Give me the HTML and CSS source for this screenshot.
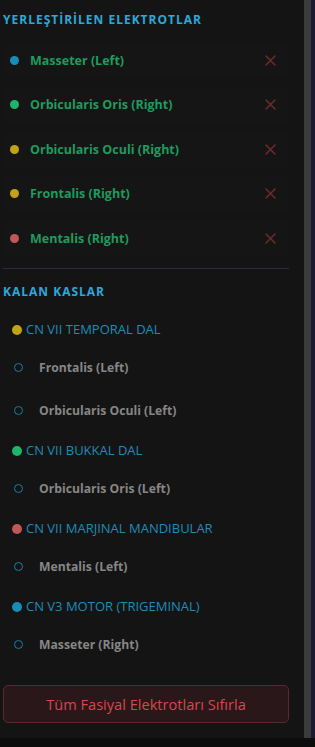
FILE: index.html
```html
<!DOCTYPE html>
<html lang="tr">
<head>
    <meta charset="UTF-8">
    <meta name="viewport" content="width=device-width, initial-scale=1.0">
    <title>Fasiyal Elektrotlar</title>
    <link rel="stylesheet" href="styles.css">
</head>
<body>
    <div class="app">
        <div class="sidebar-row">
            <aside class="panel">
                <h2 class="section-title">Yerleştirilen Elektrotlar</h2>
                <ul class="placed-list">
                    <li class="placed-item">
                        <span class="dot dot-blue"></span>
                        <span class="placed-name">Masseter (Left)</span>
                        <button class="remove-btn" title="Kaldır">
                            <svg width="11" height="11" viewBox="0 0 11 11"><path d="M1 1 L10 10 M10 1 L1 10" stroke="currentColor" stroke-width="1.5" stroke-linecap="round"/></svg>
                        </button>
                    </li>
                    <li class="placed-item">
                        <span class="dot dot-green"></span>
                        <span class="placed-name">Orbicularis Oris (Right)</span>
                        <button class="remove-btn" title="Kaldır">
                            <svg width="11" height="11" viewBox="0 0 11 11"><path d="M1 1 L10 10 M10 1 L1 10" stroke="currentColor" stroke-width="1.5" stroke-linecap="round"/></svg>
                        </button>
                    </li>
                    <li class="placed-item">
                        <span class="dot dot-yellow"></span>
                        <span class="placed-name">Orbicularis Oculi (Right)</span>
                        <button class="remove-btn" title="Kaldır">
                            <svg width="11" height="11" viewBox="0 0 11 11"><path d="M1 1 L10 10 M10 1 L1 10" stroke="currentColor" stroke-width="1.5" stroke-linecap="round"/></svg>
                        </button>
                    </li>
                    <li class="placed-item">
                        <span class="dot dot-yellow"></span>
                        <span class="placed-name">Frontalis (Right)</span>
                        <button class="remove-btn" title="Kaldır">
                            <svg width="11" height="11" viewBox="0 0 11 11"><path d="M1 1 L10 10 M10 1 L1 10" stroke="currentColor" stroke-width="1.5" stroke-linecap="round"/></svg>
                        </button>
                    </li>
                    <li class="placed-item">
                        <span class="dot dot-red"></span>
                        <span class="placed-name">Mentalis (Right)</span>
                        <button class="remove-btn" title="Kaldır">
                            <svg width="11" height="11" viewBox="0 0 11 11"><path d="M1 1 L10 10 M10 1 L1 10" stroke="currentColor" stroke-width="1.5" stroke-linecap="round"/></svg>
                        </button>
                    </li>
                </ul>

                <hr class="divider">

                <h2 class="section-title section-title-2">Kalan Kaslar</h2>

                <div class="nerve-group">
                    <div class="nerve-title"><span class="nerve-dot dot-yellow"></span>CN VII TEMPORAL DAL</div>
                    <ul class="muscle-list">
                        <li class="muscle-item"><span class="ring"></span>Frontalis (Left)</li>
                        <li class="muscle-item"><span class="ring"></span>Orbicularis Oculi (Left)</li>
                    </ul>
                </div>
                <div class="nerve-group">
                    <div class="nerve-title"><span class="nerve-dot dot-green"></span>CN VII BUKKAL DAL</div>
                    <ul class="muscle-list">
                        <li class="muscle-item"><span class="ring"></span>Orbicularis Oris (Left)</li>
                    </ul>
                </div>
                <div class="nerve-group">
                    <div class="nerve-title"><span class="nerve-dot dot-red"></span>CN VII MARJINAL MANDIBULAR</div>
                    <ul class="muscle-list">
                        <li class="muscle-item"><span class="ring"></span>Mentalis (Left)</li>
                    </ul>
                </div>
                <div class="nerve-group">
                    <div class="nerve-title"><span class="nerve-dot dot-blue"></span>CN V3 MOTOR (TRIGEMINAL)</div>
                    <ul class="muscle-list">
                        <li class="muscle-item"><span class="ring"></span>Masseter (Right)</li>
                    </ul>
                </div>

                <button class="reset-btn">Tüm Fasiyal Elektrotları Sıfırla</button>
            </aside>
            <div class="scrollbar"></div>
            <div class="edge"></div>
        </div>
        <div class="next-strip">
            <span class="next-text">Aktif kanal: bilgilendirme listesi</span>
        </div>
    </div>
</body>
</html>
```

FILE: styles.css
```css
body {
    margin: 0;
    height: 747px;
    overflow: hidden;
    background-color: #0d0d0d;
    font-family: "Open Sans", "Noto Sans", Arial, sans-serif;
}
.app {
    display: flex;
    flex-direction: column;
    height: 747px;
}
.sidebar-row {
    display: flex;
    height: 738px;
    flex-shrink: 0;
}
.panel {
    flex: 1;
    background-color: #141414;
    padding: 12px 15px 0 3px;
    overflow: hidden;
}
.scrollbar {
    width: 7px;
    background-color: #3a3b3a;
}
.edge {
    width: 4px;
    background-color: #1b1a30;
}
.section-title {
    margin: 0;
    height: 16px;
    line-height: 16px;
    font-size: 12px;
    font-weight: 700;
    letter-spacing: 1px;
    text-transform: uppercase;
    color: #2aa9dc;
}
.placed-list {
    list-style: none;
    margin: 14px 0 0;
    padding: 0;
}
.placed-item {
    display: flex;
    align-items: center;
    height: 36px;
    margin-bottom: 8.5px;
    padding-left: 7px;
    background-color: #151515;
    border-radius: 4px;
}
.placed-item:last-child {
    margin-bottom: 0;
}
.dot {
    width: 9px;
    height: 9px;
    border-radius: 50%;
    margin-right: 11px;
    flex-shrink: 0;
}
.dot-blue { background-color: #1a8db7; }
.dot-green { background-color: #1eb56a; }
.dot-yellow { background-color: #c3a316; }
.dot-red { background-color: #c05858; }
.placed-name {
    flex: 1;
    font-size: 12.5px;
    font-weight: 700;
    color: #1f9b5e;
}
.remove-btn {
    background: none;
    border: none;
    padding: 0;
    margin-right: 13px;
    color: #6e2a2d;
    display: flex;
    cursor: pointer;
}
.divider {
    margin: 12px 0 0;
    border: none;
    border-top: 1px solid #2a2e38;
}
.section-title-2 {
    margin-top: 15px;
}
.nerve-group {
    margin-top: 12px;
}
.section-title-2 + .nerve-group {
    margin-top: 19px;
}
.nerve-title {
    display: flex;
    align-items: center;
    height: 20px;
    padding-left: 9px;
    font-size: 13px;
    color: #1f8cb6;
}
.nerve-dot {
    width: 10px;
    height: 10px;
    border-radius: 50%;
    margin-right: 4px;
    margin-top: 2px;
}
.muscle-list {
    list-style: none;
    margin: 0;
    padding: 10px 0 0;
    display: flex;
    flex-direction: column;
    gap: 7px;
}
.muscle-item {
    display: flex;
    align-items: center;
    height: 36px;
    padding-left: 11px;
    font-size: 12.2px;
    font-weight: 700;
    color: #868686;
}
.ring {
    width: 7px;
    height: 7px;
    border: 1.5px solid #1a7fa6;
    border-radius: 50%;
    margin-right: 16px;
}
.reset-btn {
    display: block;
    width: 100%;
    height: 38px;
    margin-top: 23px;
    background-color: #2a1719;
    border: 1px solid #5a2a2f;
    border-radius: 5px;
    color: #d8474c;
    font-family: "Open Sans", "Noto Sans", Arial, sans-serif;
    font-size: 14.6px;
    cursor: pointer;
}
.next-strip {
    flex: 1;
    background-color: #0c0c0c;
    overflow: hidden;
    padding-left: 30px;
}
.next-text {
    display: block;
    margin-top: 5px;
    font-size: 13px;
    font-weight: 700;
    color: #1fbf3f;
    letter-spacing: 2px;
}
```
